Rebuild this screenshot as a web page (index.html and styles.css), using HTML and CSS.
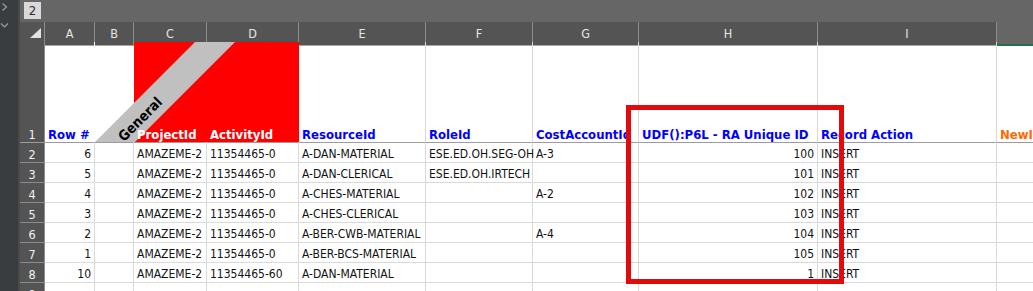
FILE: index.html
```html
<!DOCTYPE html>
<html lang="en">
<head>
  <meta charset="UTF-8">
  <title>Resource Assignments</title>
  <link rel="stylesheet" href="styles.css">
</head>
<body>

  <div class="side">
    <svg width="20" height="32" viewBox="0 0 20 32">
      <polyline points="2.5,3.5 6.5,7 2.5,10.5" fill="none" stroke="#9c9c9c" stroke-width="1.2"/>
      <polyline points="1,23.5 4.5,27 8,23.5" fill="none" stroke="#9c9c9c" stroke-width="1.2"/>
    </svg>
  </div>

  <div class="main">
    <div class="topbar">
      <span class="level-btn">2</span>
    </div>

    <div class="sheet">
      <!-- column letters -->
      <div class="row head">
        <span class="corner">
          <svg width="24" height="19" viewBox="0 0 24 19"><polygon points="10,16 21,16 21,6" fill="#e2e2e2"/></svg>
        </span>
        <span class="ch">A</span>
        <span class="ch">B</span>
        <span class="ch">C</span>
        <span class="ch">D</span>
        <span class="ch">E</span>
        <span class="ch">F</span>
        <span class="ch">G</span>
        <span class="ch">H</span>
        <span class="ch">I</span>
        <span class="ch sel"></span>
      </div>

      <!-- field names -->
      <div class="row titles">
        <span class="rh">1</span>
        <span class="cell white">Row #</span>
        <svg class="diag" width="204" height="100" viewBox="0 0 204 100">
          <rect x="39" y="0" width="165" height="100" fill="#ff0000"/>
          <polygon points="0,100 40,100 140,0 100,0" fill="#c0c0c0"/>
          <text x="45" y="77" transform="rotate(-45 45 77)" text-anchor="middle" dominant-baseline="central" class="diag-text">General</text>
        </svg>
        <span class="cell fill col-b"></span>
        <span class="cell fill col-c light">ProjectId</span>
        <span class="cell fill col-d light">ActivityId</span>
        <span class="cell">ResourceId</span>
        <span class="cell">RoleId</span>
        <span class="cell">CostAccountId</span>
        <span class="cell">UDF():P6L - RA Unique ID</span>
        <span class="cell">Record Action</span>
        <span class="cell orange">NewId</span>
      </div>

      <div class="row">
        <span class="rh">2</span><span class="cell num">6</span><span class="cell"></span>
        <span class="cell">AMAZEME-2</span><span class="cell">11354465-0</span><span class="cell">A-DAN-MATERIAL</span>
        <span class="cell">ESE.ED.OH.SEG-OH</span><span class="cell">A-3</span><span class="cell num">100</span>
        <span class="cell">INSERT</span><span class="cell"></span>
      </div>
      <div class="row">
        <span class="rh">3</span><span class="cell num">5</span><span class="cell"></span>
        <span class="cell">AMAZEME-2</span><span class="cell">11354465-0</span><span class="cell">A-DAN-CLERICAL</span>
        <span class="cell">ESE.ED.OH.IRTECH</span><span class="cell"></span><span class="cell num">101</span>
        <span class="cell">INSERT</span><span class="cell"></span>
      </div>
      <div class="row">
        <span class="rh">4</span><span class="cell num">4</span><span class="cell"></span>
        <span class="cell">AMAZEME-2</span><span class="cell">11354465-0</span><span class="cell">A-CHES-MATERIAL</span>
        <span class="cell"></span><span class="cell">A-2</span><span class="cell num">102</span>
        <span class="cell">INSERT</span><span class="cell"></span>
      </div>
      <div class="row">
        <span class="rh">5</span><span class="cell num">3</span><span class="cell"></span>
        <span class="cell">AMAZEME-2</span><span class="cell">11354465-0</span><span class="cell">A-CHES-CLERICAL</span>
        <span class="cell"></span><span class="cell"></span><span class="cell num">103</span>
        <span class="cell">INSERT</span><span class="cell"></span>
      </div>
      <div class="row">
        <span class="rh">6</span><span class="cell num">2</span><span class="cell"></span>
        <span class="cell">AMAZEME-2</span><span class="cell">11354465-0</span><span class="cell">A-BER-CWB-MATERIAL</span>
        <span class="cell"></span><span class="cell">A-4</span><span class="cell num">104</span>
        <span class="cell">INSERT</span><span class="cell"></span>
      </div>
      <div class="row">
        <span class="rh">7</span><span class="cell num">1</span><span class="cell"></span>
        <span class="cell">AMAZEME-2</span><span class="cell">11354465-0</span><span class="cell">A-BER-BCS-MATERIAL</span>
        <span class="cell"></span><span class="cell"></span><span class="cell num">105</span>
        <span class="cell">INSERT</span><span class="cell"></span>
      </div>
      <div class="row">
        <span class="rh">8</span><span class="cell num">10</span><span class="cell"></span>
        <span class="cell">AMAZEME-2</span><span class="cell">11354465-60</span><span class="cell">A-DAN-MATERIAL</span>
        <span class="cell"></span><span class="cell"></span><span class="cell num">1</span>
        <span class="cell">INSERT</span><span class="cell"></span>
      </div>
      <div class="row">
        <span class="rh">9</span><span class="cell"></span><span class="cell"></span>
        <span class="cell"></span><span class="cell"></span><span class="cell"></span>
        <span class="cell"></span><span class="cell"></span><span class="cell"></span>
        <span class="cell"></span><span class="cell"></span>
      </div>

      <!-- highlight box drawn over the sheet -->
      <div class="highlight"></div>
    </div>
  </div>

</body>
</html>
```

FILE: styles.css
```css
body {
  margin: 0;
  height: 100vh;
  overflow: hidden;
  display: flex;
  background: #fff;
  font-family: 'DejaVu Sans Condensed', Lato, sans-serif;
}

.side {
  width: 18px;
  flex: none;
  background: #3a3d3f;
  border-right: 2px solid #4a4a4a;
}

.main {
  flex: 1;
  min-width: 0;
  display: flex;
  flex-direction: column;
}

.topbar {
  height: 22px;
  flex: none;
  background: #666;
  display: flex;
  align-items: flex-start;
  padding: 2px 0 0 4px;
  box-sizing: border-box;
}

.level-btn {
  width: 17px;
  height: 17px;
  background: #d9d9d9;
  color: #2e2e2e;
  font-size: 13px;
  display: flex;
  align-items: center;
  justify-content: center;
}

/* Sheet grid */
.sheet {
  position: relative;
}

.row {
  display: grid;
  grid-template-columns: 25px 50px 39px 73px 92px 127px 107px 106px 179px 179px 60px;
  height: 20px;
}

.row.titles {
  height: 101px;
}

.cell {
  box-sizing: border-box;
  border-right: 1px solid #dadada;
  border-bottom: 1px solid #dadada;
  padding: 0 3px;
  display: flex;
  align-items: flex-end;
  font-size: 12px;
  line-height: 15px;
  color: #111;
  white-space: nowrap;
  position: relative;
}

.cell.num {
  justify-content: flex-end;
}

.rh {
  box-sizing: border-box;
  background: #545454;
  color: #f2f2f2;
  border-right: 1px solid #8c8c8c;
  border-bottom: 1px solid #8c8c8c;
  display: flex;
  align-items: flex-end;
  justify-content: center;
  font-size: 12.5px;
  line-height: 15px;
}

/* Column letters */
.head {
  height: 20px;
}

.corner, .ch {
  box-sizing: border-box;
  background: #545454;
  border-right: 1px solid #8c8c8c;
  border-bottom: 1px solid #a6a6a6;
}

.ch {
  color: #e6e6e6;
  font-size: 12.5px;
  display: flex;
  align-items: center;
  justify-content: center;
}

.ch.sel {
  background: #666;
  border-right: none;
  border-bottom: 2px solid #217346;
}

/* Field names row */
.titles .cell, .titles .rh {
  border-bottom-color: #9c9c9c;
}

.titles .cell {
  font-weight: 700;
  font-size: 13px;
  color: #0000ff;
}

.titles .cell.white {
  border-right-color: #fff;
}

.titles .cell.fill {
  grid-row: 1;
  border-right-color: transparent;
}

.col-b { grid-column: 3; }
.col-c { grid-column: 4; }
.col-d { grid-column: 5; }

.titles .cell.light {
  color: #fff;
}

.titles .cell.orange {
  color: #ff6a00;
}

.diag {
  grid-row: 1;
  grid-column: 3 / 6;
  align-self: start;
}

.diag-text {
  font-family: 'DejaVu Sans Condensed', Lato, sans-serif;
  font-weight: 700;
  font-size: 14px;
  fill: #000;
}

/* Red box */
.highlight {
  position: absolute;
  left: 606px;
  top: 83px;
  width: 218px;
  height: 179px;
  box-sizing: border-box;
  border: 5px solid #e20a0a;
}
```
